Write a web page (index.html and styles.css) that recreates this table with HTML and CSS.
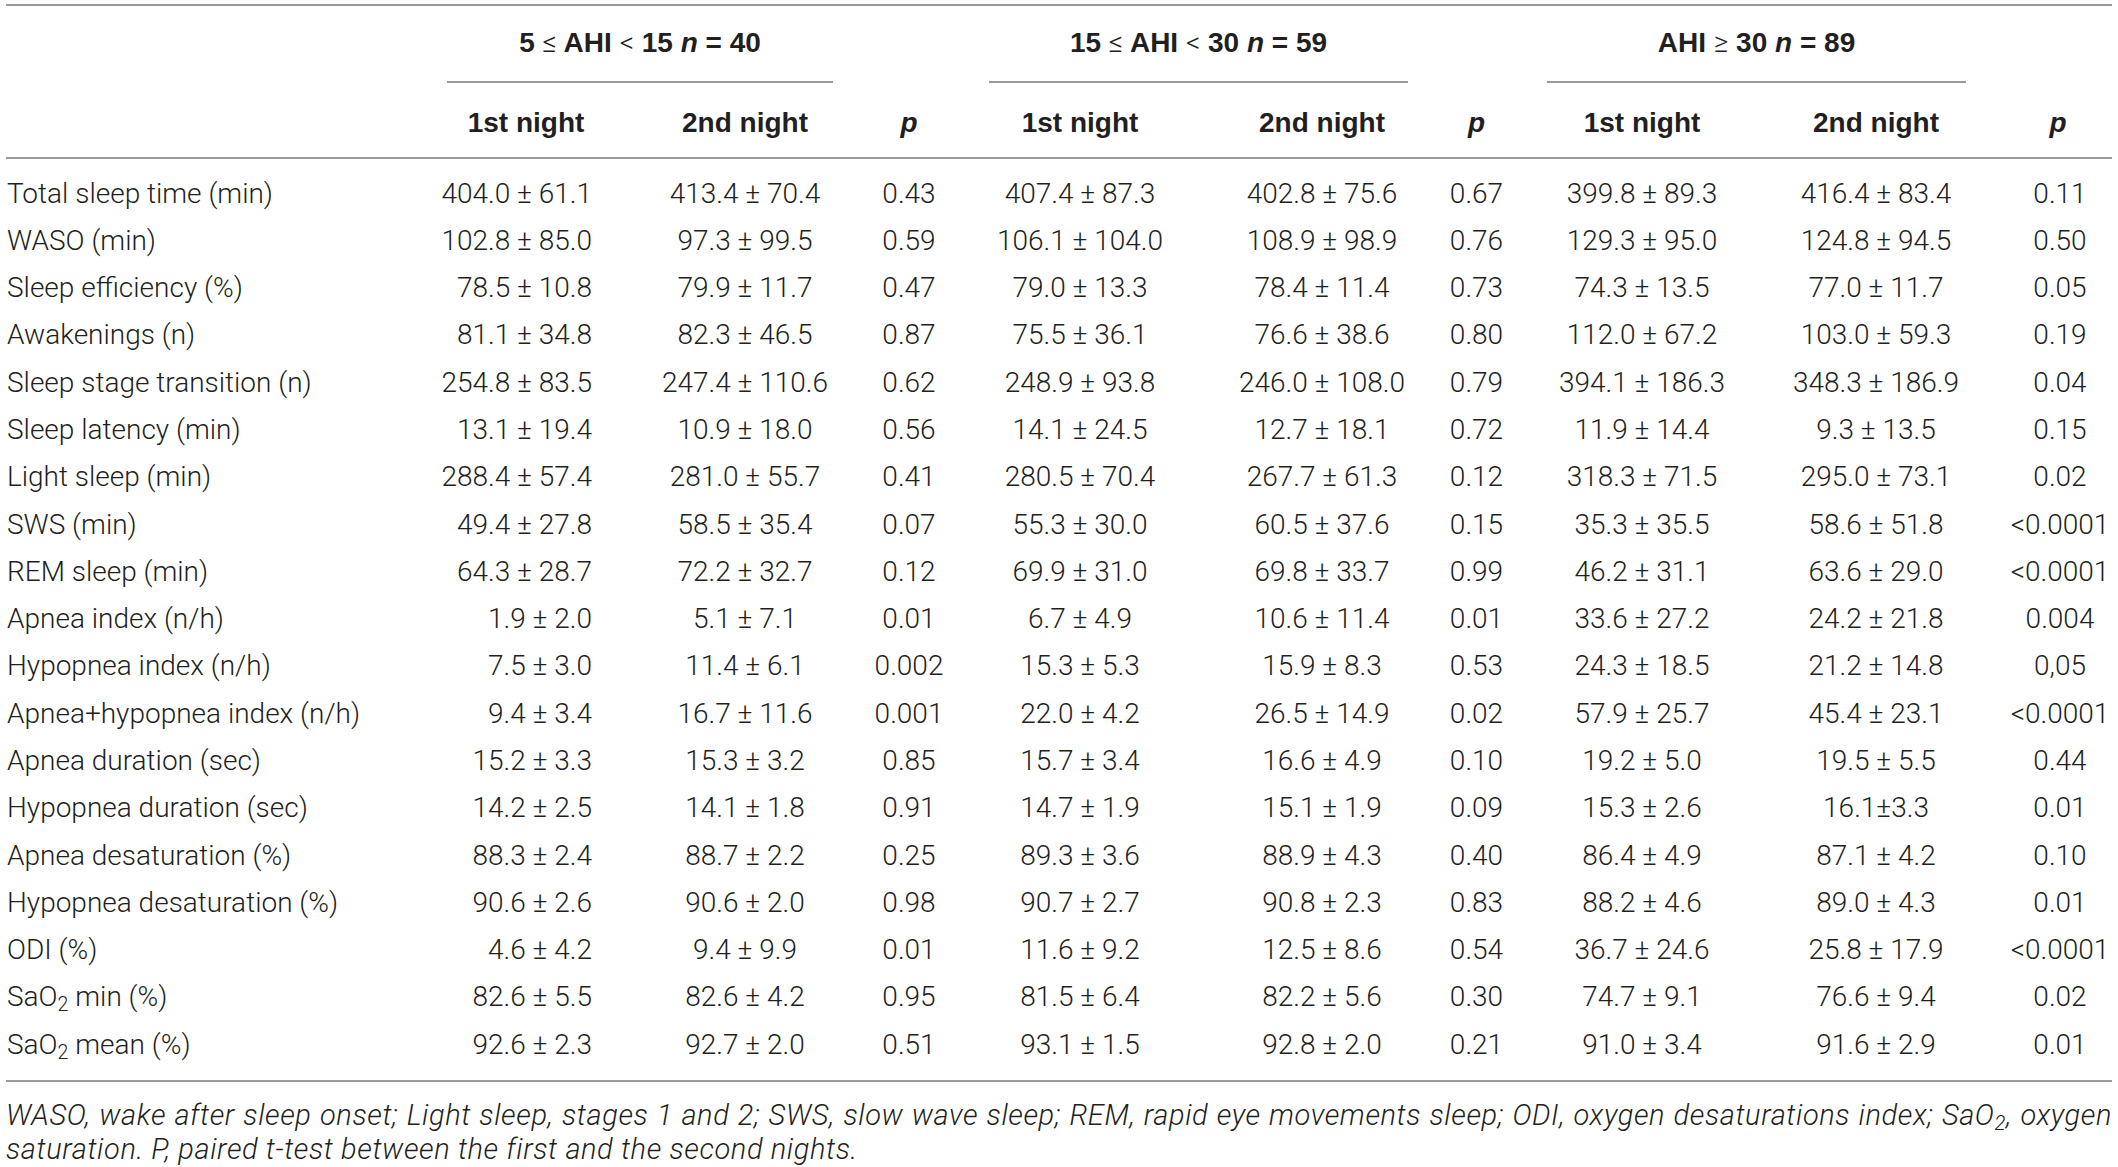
FILE: index.html
```html
<!DOCTYPE html>
<html lang="en">
<head>
    <meta charset="UTF-8">
    <meta name="viewport" content="width=device-width, initial-scale=1.0">
    <title>Sleep parameters by AHI group</title>
    <link rel="stylesheet" href="styles.css">
</head>
<body>
    <table class="sleep-table">
        <colgroup>
            <col class="col-label">
            <col class="col-c1">
            <col class="col-c2">
            <col class="col-p1">
            <col class="col-c4">
            <col class="col-c5">
            <col class="col-p2">
            <col class="col-c7">
            <col class="col-c8">
            <col class="col-p3">
        </colgroup>
        <thead>
            <tr class="group-row">
                <th rowspan="2" class="corner"></th>
                <th colspan="2"><div class="group g1">5 <span class="rel">&le;</span> AHI <span class="rel">&lt;</span> 15 <i>n</i> = 40</div></th>
                <th></th>
                <th colspan="2"><div class="group g2">15 <span class="rel">&le;</span> AHI <span class="rel">&lt;</span> 30 <i>n</i> = 59</div></th>
                <th></th>
                <th colspan="2"><div class="group g3">AHI <span class="rel">&ge;</span> 30 <i>n</i> = 89</div></th>
                <th></th>
            </tr>
            <tr class="night-row">
                <th>1st night</th>
                <th>2nd night</th>
                <th><i>p</i></th>
                <th>1st night</th>
                <th>2nd night</th>
                <th><i>p</i></th>
                <th>1st night</th>
                <th>2nd night</th>
                <th class="last-p"><i>p</i></th>
            </tr>
        </thead>
        <tbody>
            <tr><td>Total sleep time (min)</td><td>404.0 &plusmn; 61.1</td><td>413.4 &plusmn; 70.4</td><td>0.43</td><td>407.4 &plusmn; 87.3</td><td>402.8 &plusmn; 75.6</td><td>0.67</td><td>399.8 &plusmn; 89.3</td><td>416.4 &plusmn; 83.4</td><td>0.11</td></tr>
            <tr><td>WASO (min)</td><td>102.8 &plusmn; 85.0</td><td>97.3 &plusmn; 99.5</td><td>0.59</td><td>106.1 &plusmn; 104.0</td><td>108.9 &plusmn; 98.9</td><td>0.76</td><td>129.3 &plusmn; 95.0</td><td>124.8 &plusmn; 94.5</td><td>0.50</td></tr>
            <tr><td>Sleep efficiency (%)</td><td>78.5 &plusmn; 10.8</td><td>79.9 &plusmn; 11.7</td><td>0.47</td><td>79.0 &plusmn; 13.3</td><td>78.4 &plusmn; 11.4</td><td>0.73</td><td>74.3 &plusmn; 13.5</td><td>77.0 &plusmn; 11.7</td><td>0.05</td></tr>
            <tr><td>Awakenings (n)</td><td>81.1 &plusmn; 34.8</td><td>82.3 &plusmn; 46.5</td><td>0.87</td><td>75.5 &plusmn; 36.1</td><td>76.6 &plusmn; 38.6</td><td>0.80</td><td>112.0 &plusmn; 67.2</td><td>103.0 &plusmn; 59.3</td><td>0.19</td></tr>
            <tr><td>Sleep stage transition (n)</td><td>254.8 &plusmn; 83.5</td><td>247.4 &plusmn; 110.6</td><td>0.62</td><td>248.9 &plusmn; 93.8</td><td>246.0 &plusmn; 108.0</td><td>0.79</td><td>394.1 &plusmn; 186.3</td><td>348.3 &plusmn; 186.9</td><td>0.04</td></tr>
            <tr><td>Sleep latency (min)</td><td>13.1 &plusmn; 19.4</td><td>10.9 &plusmn; 18.0</td><td>0.56</td><td>14.1 &plusmn; 24.5</td><td>12.7 &plusmn; 18.1</td><td>0.72</td><td>11.9 &plusmn; 14.4</td><td>9.3 &plusmn; 13.5</td><td>0.15</td></tr>
            <tr><td>Light sleep (min)</td><td>288.4 &plusmn; 57.4</td><td>281.0 &plusmn; 55.7</td><td>0.41</td><td>280.5 &plusmn; 70.4</td><td>267.7 &plusmn; 61.3</td><td>0.12</td><td>318.3 &plusmn; 71.5</td><td>295.0 &plusmn; 73.1</td><td>0.02</td></tr>
            <tr><td>SWS (min)</td><td>49.4 &plusmn; 27.8</td><td>58.5 &plusmn; 35.4</td><td>0.07</td><td>55.3 &plusmn; 30.0</td><td>60.5 &plusmn; 37.6</td><td>0.15</td><td>35.3 &plusmn; 35.5</td><td>58.6 &plusmn; 51.8</td><td>&lt;0.0001</td></tr>
            <tr><td>REM sleep (min)</td><td>64.3 &plusmn; 28.7</td><td>72.2 &plusmn; 32.7</td><td>0.12</td><td>69.9 &plusmn; 31.0</td><td>69.8 &plusmn; 33.7</td><td>0.99</td><td>46.2 &plusmn; 31.1</td><td>63.6 &plusmn; 29.0</td><td>&lt;0.0001</td></tr>
            <tr><td>Apnea index (n/h)</td><td>1.9 &plusmn; 2.0</td><td>5.1 &plusmn; 7.1</td><td>0.01</td><td>6.7 &plusmn; 4.9</td><td>10.6 &plusmn; 11.4</td><td>0.01</td><td>33.6 &plusmn; 27.2</td><td>24.2 &plusmn; 21.8</td><td>0.004</td></tr>
            <tr><td>Hypopnea index (n/h)</td><td>7.5 &plusmn; 3.0</td><td>11.4 &plusmn; 6.1</td><td>0.002</td><td>15.3 &plusmn; 5.3</td><td>15.9 &plusmn; 8.3</td><td>0.53</td><td>24.3 &plusmn; 18.5</td><td>21.2 &plusmn; 14.8</td><td>0,05</td></tr>
            <tr><td>Apnea+hypopnea index (n/h)</td><td>9.4 &plusmn; 3.4</td><td>16.7 &plusmn; 11.6</td><td>0.001</td><td>22.0 &plusmn; 4.2</td><td>26.5 &plusmn; 14.9</td><td>0.02</td><td>57.9 &plusmn; 25.7</td><td>45.4 &plusmn; 23.1</td><td>&lt;0.0001</td></tr>
            <tr><td>Apnea duration (sec)</td><td>15.2 &plusmn; 3.3</td><td>15.3 &plusmn; 3.2</td><td>0.85</td><td>15.7 &plusmn; 3.4</td><td>16.6 &plusmn; 4.9</td><td>0.10</td><td>19.2 &plusmn; 5.0</td><td>19.5 &plusmn; 5.5</td><td>0.44</td></tr>
            <tr><td>Hypopnea duration (sec)</td><td>14.2 &plusmn; 2.5</td><td>14.1 &plusmn; 1.8</td><td>0.91</td><td>14.7 &plusmn; 1.9</td><td>15.1 &plusmn; 1.9</td><td>0.09</td><td>15.3 &plusmn; 2.6</td><td>16.1&plusmn;3.3</td><td>0.01</td></tr>
            <tr><td>Apnea desaturation (%)</td><td>88.3 &plusmn; 2.4</td><td>88.7 &plusmn; 2.2</td><td>0.25</td><td>89.3 &plusmn; 3.6</td><td>88.9 &plusmn; 4.3</td><td>0.40</td><td>86.4 &plusmn; 4.9</td><td>87.1 &plusmn; 4.2</td><td>0.10</td></tr>
            <tr><td>Hypopnea desaturation (%)</td><td>90.6 &plusmn; 2.6</td><td>90.6 &plusmn; 2.0</td><td>0.98</td><td>90.7 &plusmn; 2.7</td><td>90.8 &plusmn; 2.3</td><td>0.83</td><td>88.2 &plusmn; 4.6</td><td>89.0 &plusmn; 4.3</td><td>0.01</td></tr>
            <tr><td>ODI (%)</td><td>4.6 &plusmn; 4.2</td><td>9.4 &plusmn; 9.9</td><td>0.01</td><td>11.6 &plusmn; 9.2</td><td>12.5 &plusmn; 8.6</td><td>0.54</td><td>36.7 &plusmn; 24.6</td><td>25.8 &plusmn; 17.9</td><td>&lt;0.0001</td></tr>
            <tr><td>SaO<sub>2</sub> min (%)</td><td>82.6 &plusmn; 5.5</td><td>82.6 &plusmn; 4.2</td><td>0.95</td><td>81.5 &plusmn; 6.4</td><td>82.2 &plusmn; 5.6</td><td>0.30</td><td>74.7 &plusmn; 9.1</td><td>76.6 &plusmn; 9.4</td><td>0.02</td></tr>
            <tr><td>SaO<sub>2</sub> mean (%)</td><td>92.6 &plusmn; 2.3</td><td>92.7 &plusmn; 2.0</td><td>0.51</td><td>93.1 &plusmn; 1.5</td><td>92.8 &plusmn; 2.0</td><td>0.21</td><td>91.0 &plusmn; 3.4</td><td>91.6 &plusmn; 2.9</td><td>0.01</td></tr>
        </tbody>
    </table>

    <div class="footnote">
        <p class="fn-line fn-full">WASO, wake after sleep onset; Light sleep, stages 1 and 2; SWS, slow wave sleep; REM, rapid eye movements sleep; ODI, oxygen desaturations index; SaO<sub>2</sub>, oxygen</p>
        <p class="fn-line">saturation. P, paired t-test between the first and the second nights.</p>
    </div>
</body>
</html>
```

FILE: styles.css
```css
/* Page */
body {
    margin: 0;
    background: #ffffff;
    color: #231f20;
    font-family: Roboto, "Liberation Sans", sans-serif;
    font-weight: 300;
}

/* Table frame */
.sleep-table {
    margin: 4px 0 0 6px;
    width: 2106px;
    table-layout: fixed;
    border-collapse: separate;
    border-spacing: 0;
    border-top: 2px solid #9a9a9a;
    border-bottom: 2px solid #9a9a9a;
    font-size: 28px;
}

.col-label { width: 415px; }
.col-c1 { width: 210px; }
.col-c2 { width: 228px; }
.col-p1 { width: 100px; }
.col-c4 { width: 242px; }
.col-c5 { width: 242px; }
.col-p2 { width: 67px; }
.col-c7 { width: 264px; }
.col-c8 { width: 204px; }
.col-p3 { width: 134px; }

/* Header */
.sleep-table th {
    padding: 0;
    font-family: "Liberation Sans", Arial, sans-serif;
    font-weight: 700;
    line-height: 34px;
    text-align: center;
    white-space: nowrap;
}

.group {
    padding: 20px 0 21px;
    border-bottom: 2px solid #9a9a9a;
}

.g1 { margin: 0 26px 0 26px; }
.g2 { margin: 0 35px 0 30px; }
.g3 { margin: 0 12px 0 37px; }

.group .rel {
    font-family: Roboto, "Liberation Sans", sans-serif;
    font-weight: 300;
}

.night-row th {
    padding: 23px 0 17px;
    border-bottom: 2px solid #9a9a9a;
}

.sleep-table th.corner {
    border-bottom: 2px solid #9a9a9a;
}

.night-row th.last-p {
    padding-left: 26px;
}

/* Body rows */
.sleep-table td {
    padding: 6.65px 0;
    line-height: 34px;
    text-align: center;
    white-space: nowrap;
}

.sleep-table td:first-child {
    text-align: left;
    padding-left: 1px;
}

.sleep-table td:nth-child(2) {
    text-align: right;
    padding-right: 39px;
}

.sleep-table td:last-child {
    padding-left: 30px;
}

.sleep-table tbody tr:first-child td {
    padding-top: 17.65px;
}

.sleep-table tbody tr:last-child td {
    padding-bottom: 18.65px;
}

sub {
    font-size: 0.7em;
    line-height: 0;
    vertical-align: -0.25em;
}

/* Footnote */
.footnote {
    margin: 0 0 0 6px;
    width: 2106px;
    padding-top: 16px;
    font-size: 29px;
    font-style: italic;
    letter-spacing: 0.6px;
    line-height: 34px;
}

.fn-line {
    margin: 0;
    white-space: nowrap;
}

.fn-full {
    text-align: justify;
    text-align-last: justify;
}
```
